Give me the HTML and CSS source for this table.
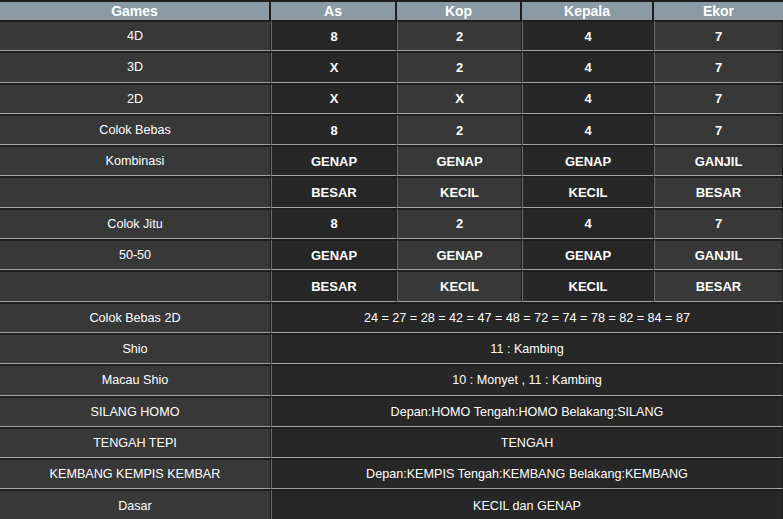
FILE: index.html
```html
<!DOCTYPE html>
<html>
<head>
<meta charset="utf-8">
<link rel="stylesheet" href="styles.css">
</head>
<body>
<table class="result">
  <thead>
    <tr><th class="c-game">Games</th><th class="c-as">As</th><th class="c-kop">Kop</th><th class="c-kep">Kepala</th><th class="c-ekor">Ekor</th></tr>
  </thead>
  <tbody>
    <tr><td class="label">4D</td><td class="dark">8</td><td class="light">2</td><td class="dark">4</td><td class="light">7</td></tr>
    <tr><td class="label">3D</td><td class="dark">X</td><td class="light">2</td><td class="dark">4</td><td class="light">7</td></tr>
    <tr><td class="label">2D</td><td class="dark">X</td><td class="light">X</td><td class="dark">4</td><td class="light">7</td></tr>
    <tr><td class="label">Colok Bebas</td><td class="dark">8</td><td class="light">2</td><td class="dark">4</td><td class="light">7</td></tr>
    <tr><td class="label">Kombinasi</td><td class="dark">GENAP</td><td class="light">GENAP</td><td class="dark">GENAP</td><td class="light">GANJIL</td></tr>
    <tr><td class="label"></td><td class="dark">BESAR</td><td class="light">KECIL</td><td class="dark">KECIL</td><td class="light">BESAR</td></tr>
    <tr><td class="label">Colok Jitu</td><td class="dark">8</td><td class="light">2</td><td class="dark">4</td><td class="light">7</td></tr>
    <tr><td class="label">50-50</td><td class="dark">GENAP</td><td class="light">GENAP</td><td class="dark">GENAP</td><td class="light">GANJIL</td></tr>
    <tr><td class="label"></td><td class="dark">BESAR</td><td class="light">KECIL</td><td class="dark">KECIL</td><td class="light">BESAR</td></tr>
    <tr><td class="label">Colok Bebas 2D</td><td class="wide" colspan="4">24 = 27 = 28 = 42 = 47 = 48 = 72 = 74 = 78 = 82 = 84 = 87</td></tr>
    <tr><td class="label">Shio</td><td class="wide" colspan="4">11 : Kambing</td></tr>
    <tr><td class="label">Macau Shio</td><td class="wide" colspan="4">10 : Monyet , 11 : Kambing</td></tr>
    <tr><td class="label">SILANG HOMO</td><td class="wide" colspan="4">Depan:HOMO Tengah:HOMO Belakang:SILANG</td></tr>
    <tr><td class="label">TENGAH TEPI</td><td class="wide" colspan="4">TENGAH</td></tr>
    <tr><td class="label">KEMBANG KEMPIS KEMBAR</td><td class="wide" colspan="4">Depan:KEMPIS Tengah:KEMBANG Belakang:KEMBANG</td></tr>
    <tr><td class="label">Dasar</td><td class="wide" colspan="4">KECIL dan GENAP</td></tr>
  </tbody>
</table>
</body>
</html>
```
FILE: styles.css
```css
html, body {
  margin: 0;
  padding: 0;
  background: #1d1d1f;
}
body {
  font-family: "Liberation Sans", Arial, sans-serif;
  color: #ffffff;
}
.result {
  width: 783px;
  border-collapse: separate;
  border-spacing: 0;
  table-layout: fixed;
  margin-top: 2px;
}
.result th {
  background: #8a9ba6;
  color: #ffffff;
  font-size: 14px;
  font-weight: bold;
  height: 18px;
  padding: 0;
  line-height: 18px;
  border-right: 2px solid #1d1d1f;
}
.result th:last-child { border-right: 0; }
.c-game { width: 269px; }
.c-as { width: 124px; }
.c-kop { width: 123px; }
.c-kep { width: 130px; }
.c-ekor { width: 129px; }
.result td {
  height: 28.3px;
  padding: 0;
  text-align: center;
  font-size: 12.6px;
  border-top: 2px solid #1d1d1f;
  border-bottom: 1px solid #a3a3a3;
  border-left: 1px solid #6f6f6f;
  border-right: 1px solid #1d1d1f;
  vertical-align: middle;
}
.result td.label {
  background: #383838;
  border-left: 0;
}
.result td.dark {
  background: #272727;
  font-weight: bold;
  font-size: 13px;
}
.result td.light {
  background: #383838;
  font-weight: bold;
  font-size: 13px;
}
.result td.wide {
  background: #272727;
}
```
